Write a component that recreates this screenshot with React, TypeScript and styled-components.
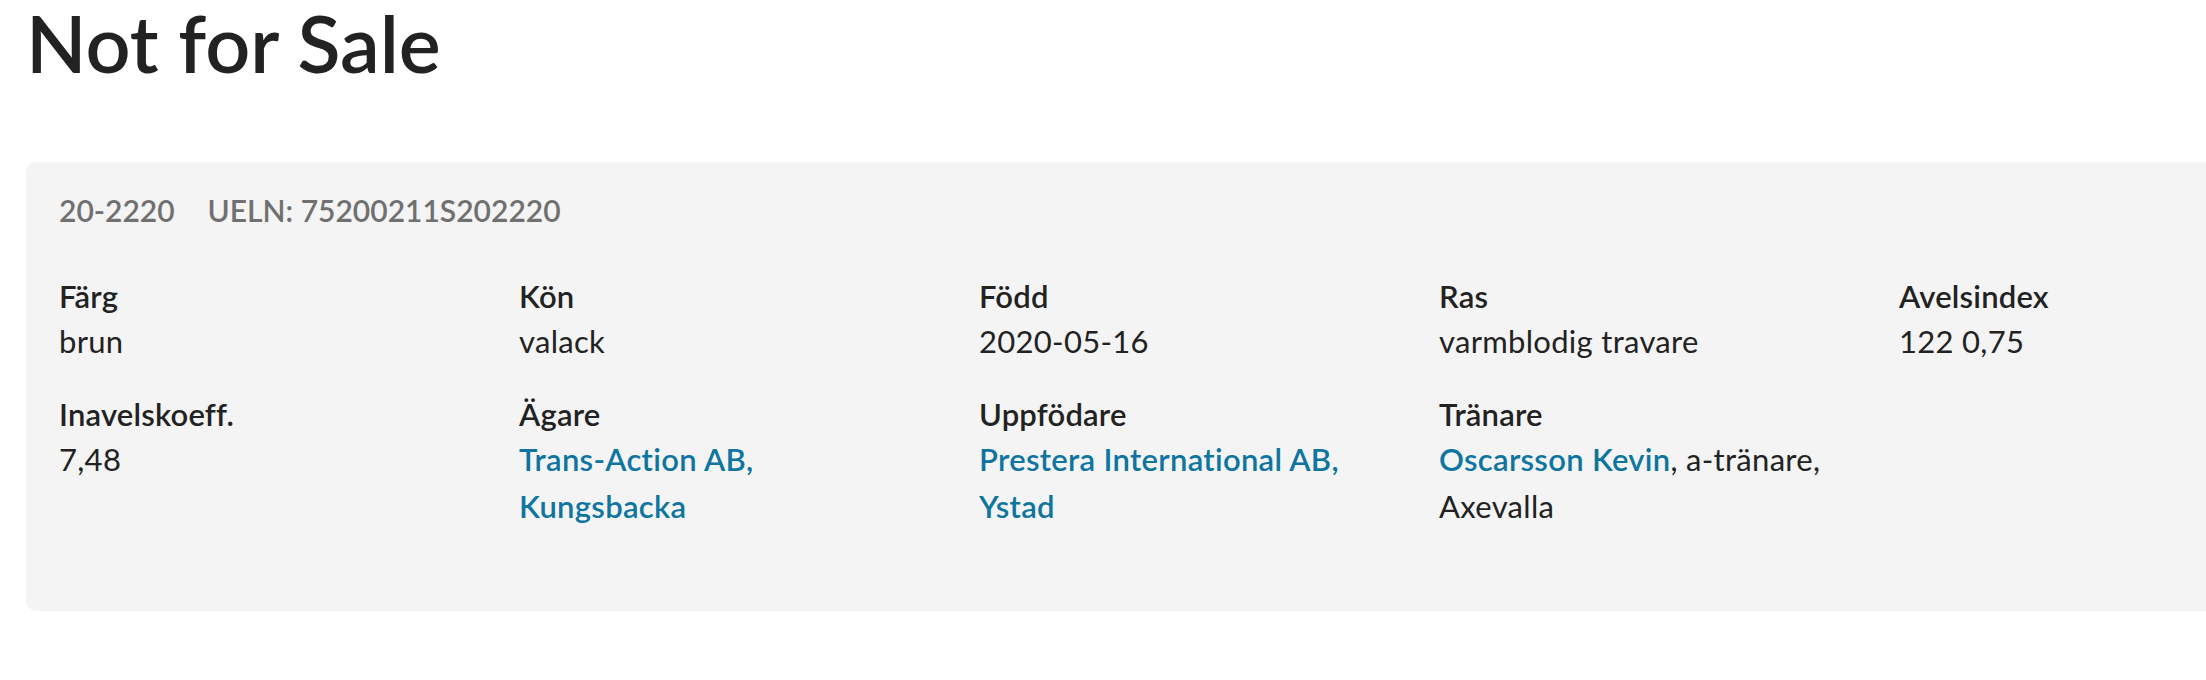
import React, { FC } from 'react'
import styled, { createGlobalStyle } from 'styled-components'

const GlobalStyle = createGlobalStyle`
html, body {
 margin: 0;
 padding: 0;
 background: #fff;
 overflow: hidden;
}
body {
 font-family: Lato, "Liberation Sans", sans-serif;
 color: #222;
}
`

const Page = styled.div`
padding: 0 0 0 26px;
`

const Title = styled.h1`
margin: 0;
font-size: 79px;
line-height: 86px;
font-weight: 600;
color: #222;
`

const Card = styled.section`
margin-top: 76px;
width: max-content;
background: #f4f4f4;
border-radius: 10px;
padding: 26px 33px 81px;
`

const IdRow = styled.div`
display: flex;
gap: 33px;
font-size: 30px;
line-height: 45px;
font-weight: 600;
color: #707070;
`

const FactGrid = styled.div`
margin-top: 42px;
display: grid;
grid-template-columns: repeat(5, 400px);
column-gap: 60px;
row-gap: 28px;
`

const FactItem = styled.div`
display: flex;
flex-direction: column;
`

const FactLabel = styled.div`
font-size: 31px;
line-height: 43px;
letter-spacing: 0.2px;
font-weight: 600;
color: #222;
`

const FactValue = styled.div`
font-size: 31px;
line-height: 47px;
letter-spacing: 0.3px;
color: #222;
`

const Link = styled.a`
color: #0e74a0;
font-weight: 600;
text-decoration: none;
`

interface Fact {
 label: string
 value: React.ReactNode
}

const facts: Fact[] = [
 { label: 'Färg', value: 'brun' },
 { label: 'Kön', value: 'valack' },
 { label: 'Född', value: '2020-05-16' },
 { label: 'Ras', value: 'varmblodig travare' },
 { label: 'Avelsindex', value: '122 0,75' },
 { label: 'Inavelskoeff.', value: '7,48' },
 { label: 'Ägare', value: <Link href='#'>Trans-Action AB, Kungsbacka</Link> },
 { label: 'Uppfödare', value: <Link href='#'>Prestera International AB, Ystad</Link> },
 {
  label: 'Tränare',
  value: (
   <>
    <Link href='#'>Oscarsson Kevin</Link>, a-tränare, Axevalla
   </>
  ),
 },
]

const HorseInfo: FC = () => {
 return (
  <Page>
   <GlobalStyle />
   <Title>Not for Sale</Title>
   <Card>
    <IdRow>
     <span>20-2220</span>
     <span>UELN: 75200211S202220</span>
    </IdRow>
    <FactGrid>
     {facts.map(f => (
      <FactItem key={f.label}>
       <FactLabel>{f.label}</FactLabel>
       <FactValue>{f.value}</FactValue>
      </FactItem>
     ))}
    </FactGrid>
   </Card>
  </Page>
 )
}

export default HorseInfo;
